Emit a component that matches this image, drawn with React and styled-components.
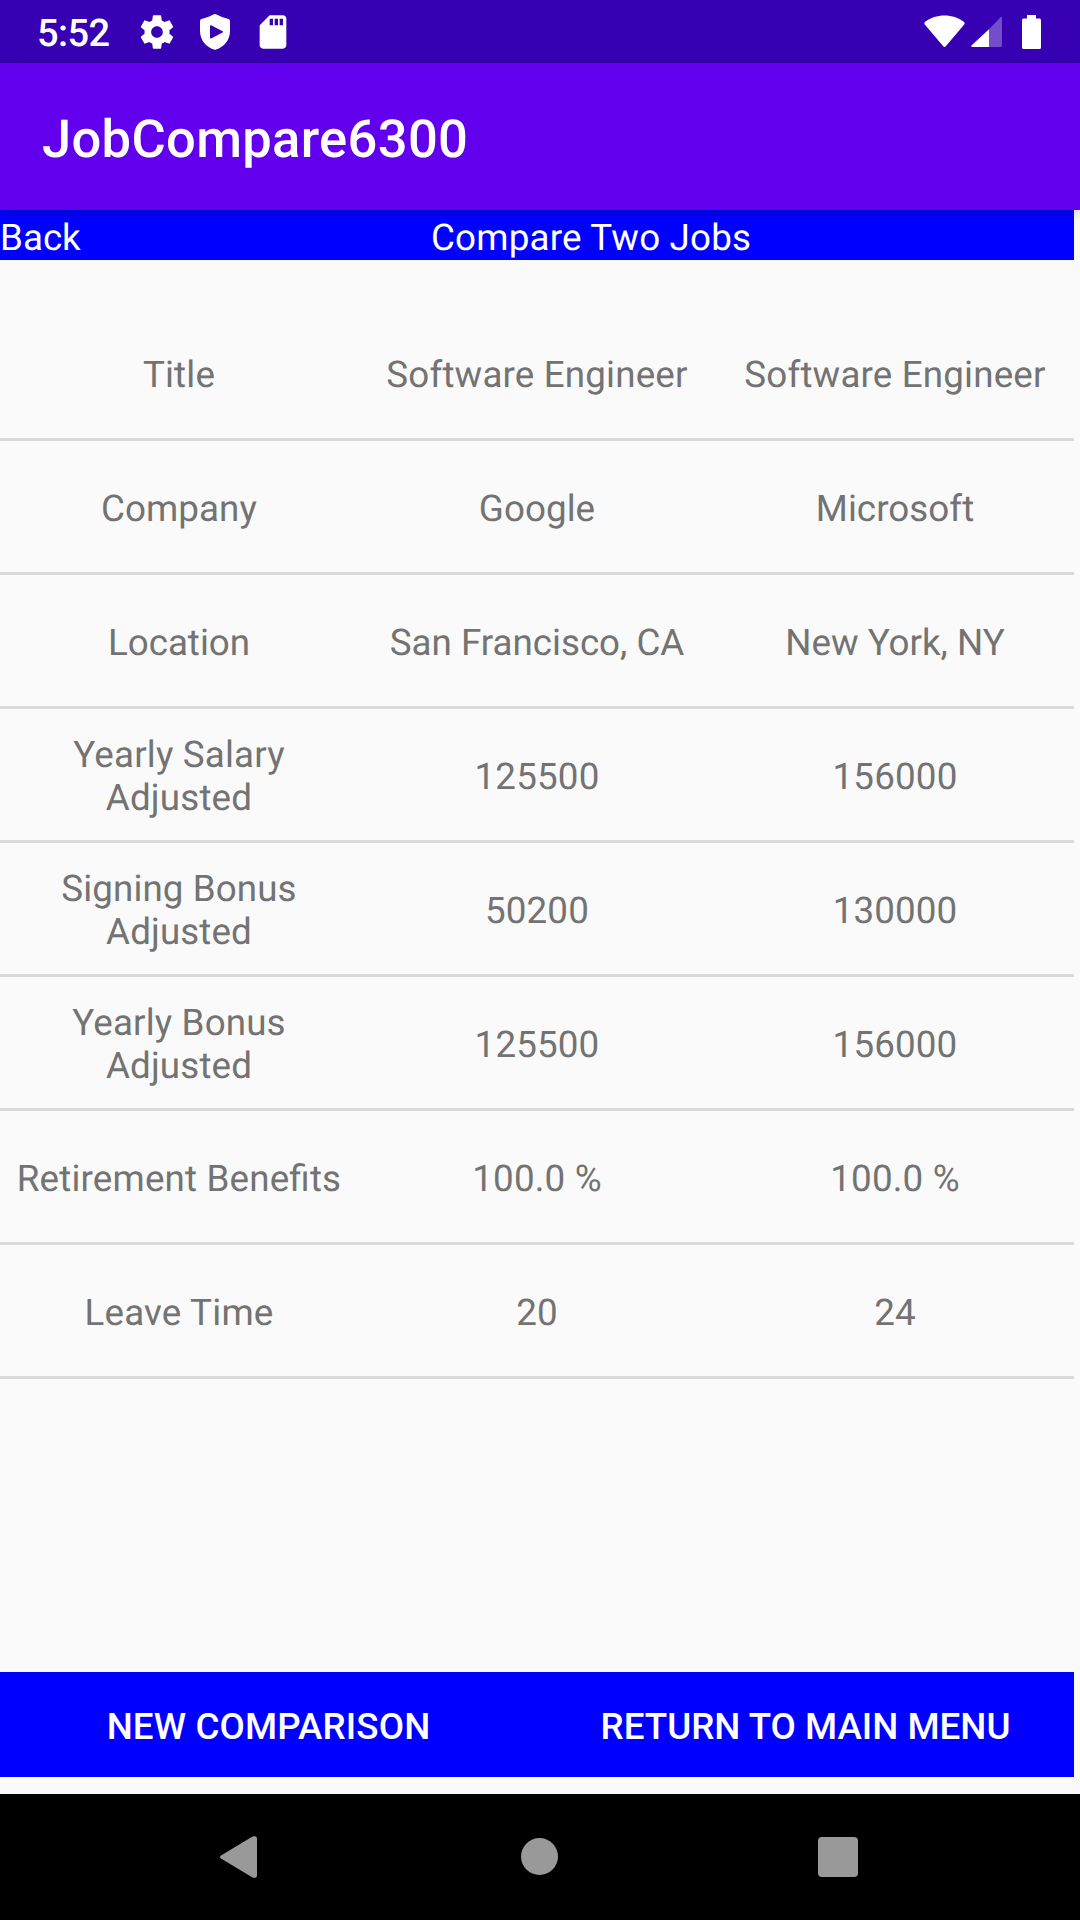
import React from "react";
import styled, { createGlobalStyle } from "styled-components";

const Global = createGlobalStyle`
  * { box-sizing: border-box; }
  body { margin: 0; background: #fafafa; font-family: Roboto, sans-serif; text-rendering: geometricPrecision; }
`;
const Screen = styled.div`
  width: 1080px; height: 1920px; display: flex; flex-direction: column;
  background: #fafafa; overflow: hidden;
`;
const StatusBar = styled.header`
  height: 63px; flex: none; background: #3700b3; color: #fff;
  display: flex; align-items: center; padding: 0 39px 0 37px;
`;
const Clock = styled.span`
  font-size: 38px; font-weight: 500; line-height: 44px; width: 100px; padding-top: 5px;
  letter-spacing: -0.6px;
`;
const Icon = styled.svg`
  display: block; flex: none; fill: #fff;
  margin-left: ${p => p.$gap || 0}px;
`;
const Spacer = styled.div`flex: 1;`;
const AppBar = styled.div`
  height: 147px; flex: none; background: #6200ee; color: #fff;
  display: flex; align-items: center; padding: 4px 42px 0;
  position: relative; z-index: 1; box-shadow: 0 3px 10px rgba(0, 0, 0, 0.2);
`;
const AppTitle = styled.h1`
  margin: 0; font-size: 52.5px; font-weight: 500; line-height: 62px; white-space: nowrap;
  letter-spacing: 0.33px;
`;
const Content = styled.main`
  width: 1074px; height: 1584px; flex: none; display: flex; flex-direction: column;
`;
const SubBar = styled.div`
  height: 50px; flex: none; background: #0000ff; color: #fff;
  display: flex; align-items: center; font-size: 36.75px; line-height: 43px; padding-top: 4px;
`;
const Back = styled.span`width: 431px;`;
const ScreenName = styled.span`letter-spacing: 0.19px;`;
const Table = styled.div`padding-top: 47px; flex: 1;`;
const Row = styled.div`
  height: 134px; display: grid; grid-template-columns: repeat(3, 1fr);
  align-items: center; border-bottom: 3px solid #dadada;
  letter-spacing: ${p => p.$tracking}px; font-feature-settings: "liga" 1;
`;
const Cell = styled.div`
  font-size: 36.75px; line-height: 43px; color: #737373; text-align: center;
  white-space: pre-line; padding-top: 3.2px;
`;
const Actions = styled.div`
  height: 105px; flex: none; margin-bottom: 17px; display: grid; grid-template-columns: 1fr 1fr;
  background: #0000ff;
`;
const Action = styled.button`
  border: 0; background: none; color: #fff; padding: 4px 0 0;
  font: 500 36.75px/43px Roboto, sans-serif;
  letter-spacing: ${p => p.$tracking || 0}px;
`;
const NavBar = styled.nav`
  height: 126px; flex: none; background: #000;
  display: flex; align-items: center; justify-content: space-between; padding: 0 219px;
`;
const NavIcon = styled.svg`display: block; fill: #999;`;

const rows = [
  { cells: ["Title", "Software Engineer", "Software Engineer"], tracking: 0.17 },
  { cells: ["Company", "Google", "Microsoft"], tracking: 0.05 },
  { cells: ["Location", "San Francisco, CA", "New York, NY"], tracking: 0 },
  { cells: ["Yearly Salary\nAdjusted", "125500", "156000"], tracking: 0.17 },
  { cells: ["Signing Bonus\nAdjusted", "50200", "130000"], tracking: 0.1 },
  { cells: ["Yearly Bonus\nAdjusted", "125500", "156000"], tracking: 0.15 },
  { cells: ["Retirement Benefits", "100.0 %", "100.0 %"], tracking: 0.17 },
  { cells: ["Leave Time", "20", "24"], tracking: 0.2 },
];

const GearIcon = () => (
  <Icon width="40" height="40" viewBox="0 0 24 24">
    <path d="M19.43 12.98c.04-.32.07-.64.07-.98s-.03-.66-.07-.98l2.11-1.65c.19-.15.24-.42.12-.64l-2-3.46c-.12-.22-.39-.3-.61-.22l-2.49 1c-.52-.4-1.08-.73-1.69-.98l-.38-2.65C14.46 2.18 14.25 2 14 2h-4c-.25 0-.46.18-.49.42l-.38 2.65c-.61.25-1.17.59-1.69.98l-2.49-1c-.23-.09-.49 0-.61.22l-2 3.46c-.13.22-.07.49.12.64l2.11 1.65c-.04.32-.07.65-.07.98s.03.66.07.98l-2.11 1.65c-.19.15-.24.42-.12.64l2 3.46c.12.22.39.3.61.22l2.49-1c.52.4 1.08.73 1.69.98l.38 2.65c.03.24.24.42.49.42h4c.25 0 .46-.18.49-.42l.38-2.65c.61-.25 1.17-.59 1.69-.98l2.49 1c.23.09.49 0 .61-.22l2-3.46c.12-.22.07-.49-.12-.64l-2.11-1.65zM12 15.5c-1.93 0-3.5-1.57-3.5-3.5s1.57-3.5 3.5-3.5 3.5 1.57 3.5 3.5-1.57 3.5-3.5 3.5z" />
  </Icon>
);
const ShieldIcon = () => (
  <Icon $gap={23} width="30" height="36" viewBox="0 0 30 36">
    <path fillRule="evenodd" d="M15 0 Q16 .2 17 .8 Q22 3.6 28.5 5 Q30 5.4 30 7 V17 C30 26 24 33 16 35.6 Q15 36 14 35.6 C6 33 0 26 0 17 V7 Q0 5.4 1.5 5 Q8 3.6 13 .8 Q14 .2 15 0 Z M10 11.5 V24.3 L11.2 24.6 L23 18.3 V17.5 L11.2 11.2 Z" />
  </Icon>
);
const SdIcon = () => (
  <Icon $gap={23} width="40" height="40" viewBox="0 0 24 24">
    <path d="M18 2h-8L4.02 8 4 20c0 1.1.9 2 2 2h12c1.1 0 2-.9 2-2V4c0-1.1-.9-2-2-2zm-6 6h-2V4h2v4zm3 0h-2V4h2v4zm3 0h-2V4h2v4z" />
  </Icon>
);
const WifiIcon = () => (
  <Icon width="41" height="34" viewBox="0 0 41 34">
    <path d="M20.5 .5 C28 .5 34.5 2.8 39.5 6.6 Q41.5 8 40 9.8 L22 31 Q20.5 32.8 19 31 L1 9.8 Q-.5 8 1.5 6.6 C6.5 2.8 13 .5 20.5 .5 Z" />
  </Icon>
);
const SignalIcon = () => (
  <Icon $gap={6} width="31" height="32" viewBox="0 0 31 32">
    <path fillOpacity=".3" d="M18 13.2 L29.3 1.4 Q31 0 31 2 V29.5 Q31 31 29.5 31 H18 Z" />
    <path d="M18 13.2 V31 H1.5 Q-.6 31 .7 29.2 Z" />
  </Icon>
);
const BatteryIcon = () => (
  <Icon $gap={20} width="19" height="34" viewBox="0 0 19 34">
    <path d="M5 0 H14 V3.5 H17.5 Q19 3.5 19 5 V32.5 Q19 34 17.5 34 H1.5 Q0 34 0 32.5 V5 Q0 3.5 1.5 3.5 H5 Z" />
  </Icon>
);

export default function App() {
  return (
    <Screen>
      <Global />
      <StatusBar>
        <Clock>5:52</Clock>
        <GearIcon />
        <ShieldIcon />
        <SdIcon />
        <Spacer />
        <WifiIcon />
        <SignalIcon />
        <BatteryIcon />
      </StatusBar>
      <AppBar><AppTitle>JobCompare6300</AppTitle></AppBar>
      <Content>
        <SubBar><Back>Back</Back><ScreenName>Compare Two Jobs</ScreenName></SubBar>
        <Table>
          {rows.map(({ cells, tracking }) => (
            <Row key={cells[0]} $tracking={tracking}>
              {cells.map((text, i) => <Cell key={i}>{text}</Cell>)}
            </Row>
          ))}
        </Table>
        <Actions>
          <Action $tracking={0.12}>NEW COMPARISON</Action>
          <Action>RETURN TO MAIN MENU</Action>
        </Actions>
      </Content>
      <NavBar>
        <NavIcon width="40" height="44" viewBox="0 0 40 44">
          <path d="M2 20.5 L33.5 1.6 Q38 0 38 4 V40 Q38 44 33.5 42.4 L2 23.5 Q0 22 2 20.5 Z" />
        </NavIcon>
        <NavIcon width="38" height="38" viewBox="0 0 38 38"><circle cx="19.5" cy="18.5" r="18.5" /></NavIcon>
        <NavIcon width="43" height="40" viewBox="0 0 43 40"><rect width="40" height="40" rx="4" /></NavIcon>
      </NavBar>
    </Screen>
  );
}
